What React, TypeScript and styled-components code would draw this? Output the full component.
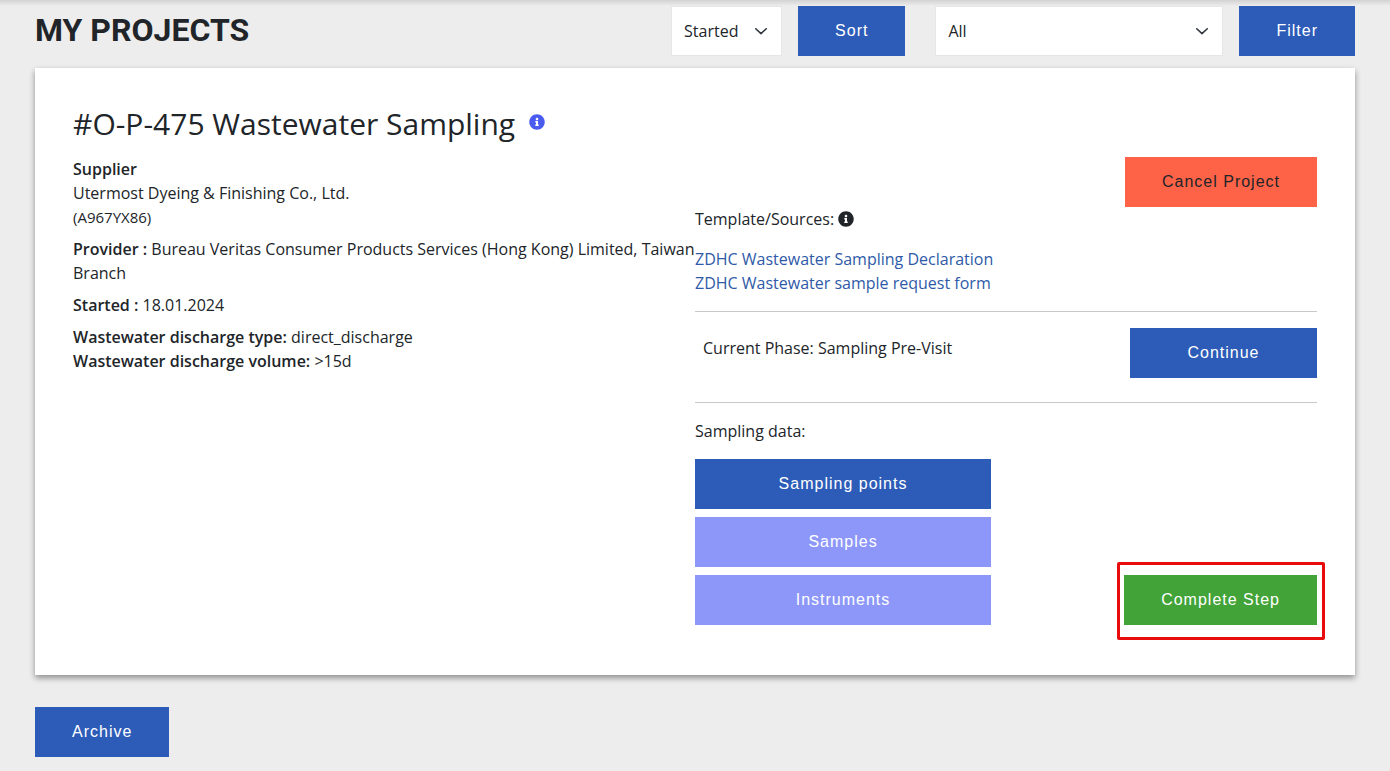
import React from "react";
import styled, { createGlobalStyle } from "styled-components";
import { FaInfoCircle } from "react-icons/fa";

const GlobalStyle = createGlobalStyle`
  *, *::before, *::after { box-sizing: border-box; }
  body {
    margin: 0;
    background: #ededed;
    color: #212529;
    font-family: "Open Sans", "Noto Sans", sans-serif;
    font-size: 16px;
    line-height: 24px;
  }
`;

const Page = styled.div`
  min-height: 100vh;
  padding: 6px 35px 14px;
  background: linear-gradient(#d2d2d2, #ededed) top / 100% 6px no-repeat;
`;

const Header = styled.header`
  display: flex;
  justify-content: space-between;
  align-items: flex-start;
  margin-bottom: 12px;
`;

const PageTitle = styled.h1`
  margin: 0;
  font-family: "Roboto", sans-serif;
  font-size: 32px;
  font-weight: 700;
  line-height: 48px;
  text-transform: uppercase;
`;

const Controls = styled.div`
  display: flex;
  gap: 30px;
`;

const ControlGroup = styled.form`
  display: flex;
  align-items: center;
  gap: 16px;
`;

const SelectBox = styled.div<{ $width: number }>`
  position: relative;
  width: ${(p) => p.$width}px;

  svg {
    position: absolute;
    top: 19px;
    right: 13px;
    pointer-events: none;
  }
`;

const Select = styled.select`
  display: block;
  width: 100%;
  height: 50px;
  padding: 0 32px 0 12px;
  appearance: none;
  border: 1px solid #e6e6e6;
  border-radius: 0;
  background: #fff;
  color: #212529;
  font: inherit;
`;

const tones = {
  blue: ["#2d5cb8", "#fff"],
  lavender: ["#8c97f9", "#fff"],
  red: ["#ff6347", "#212529"],
  green: ["#42a338", "#fff"],
};

const Button = styled.button<{ $tone?: keyof typeof tones; $minWidth?: number }>`
  min-width: ${(p) => p.$minWidth ?? 0}px;
  height: 50px;
  padding: 0 37px;
  border: 0;
  background: ${(p) => tones[p.$tone ?? "blue"][0]};
  color: ${(p) => tones[p.$tone ?? "blue"][1]};
  font-family: "Liberation Sans", Arial, sans-serif;
  font-size: 16px;
  letter-spacing: 1px;
  white-space: nowrap;
  cursor: pointer;
`;

const Card = styled.article`
  margin-bottom: 32px;
  padding: 38px 38px 50px;
  background: #fff;
  box-shadow: 0 3px 6px rgba(0, 0, 0, 0.4);
`;

const IconButton = styled.button<{ $color: string }>`
  display: inline-flex;
  padding: 0;
  border: 0;
  background: none;
  color: ${(p) => p.$color};
  font-size: 16px;
  cursor: pointer;
`;

const CardTitle = styled.h2`
  display: flex;
  align-items: flex-start;
  gap: 14px;
  margin: 0 0 15px;
  font-size: 30px;
  font-weight: 400;
  line-height: 36px;

  ${IconButton} {
    margin-top: 8px;
  }
`;

const Columns = styled.div`
  display: grid;
  grid-template-columns: 1fr 1fr;
`;

const Details = styled.div`
  p {
    margin: 0 0 8px;
  }

  strong {
    font-weight: 600;
  }
`;

const Code = styled.span`
  font-size: 15px;
  line-height: 16px;
`;

const Actions = styled.div`
  display: flex;
  flex-direction: column;
`;

const Row = styled.div<{ $align?: string }>`
  display: flex;
  justify-content: space-between;
  align-items: ${(p) => p.$align ?? "flex-start"};
`;

const CancelRow = styled(Row)`
  justify-content: flex-end;
`;

const Sources = styled.div`
  display: flex;
  align-items: center;
  gap: 4px;
  margin-bottom: 16px;
`;

const LinkList = styled.ul`
  margin: 0;
  padding: 0;
  list-style: none;
`;

const Link = styled.a`
  color: #2f5aa8;
  text-decoration: none;
`;

const Divider = styled.hr`
  width: 100%;
  margin: 16px 0;
  border: 0;
  border-top: 1px solid #c8c9ca;
`;

const PhaseRow = styled(Row)`
  padding-bottom: 8px;
`;

const Phase = styled.p`
  margin: 8px;
`;

const DataLabel = styled.p`
  margin: 0 0 16px;
`;

const ButtonStack = styled.div`
  display: grid;
  gap: 8px;
  width: 296px;
`;

const Highlight = styled.div`
  position: relative;

  &::after {
    content: "";
    position: absolute;
    inset: -13px -8px -15px -7px;
    border: 3px solid #e80c0c;
    border-radius: 2px;
    pointer-events: none;
  }
`;

const Chevron = () => (
  <svg width="16" height="12" viewBox="0 0 16 16" aria-hidden="true">
    <path
      d="m1 5 7 6.5 7-6.5"
      fill="none"
      stroke="#343a40"
      strokeWidth="2.2"
      strokeLinecap="round"
      strokeLinejoin="round"
    />
  </svg>
);

interface DropdownProps {
  label: string;
  width: number;
  options: string[];
}

const Dropdown = ({ label, width, options }: DropdownProps) => (
  <SelectBox $width={width}>
    <Select aria-label={label}>
      {options.map((o) => (
        <option key={o}>{o}</option>
      ))}
    </Select>
    <Chevron />
  </SelectBox>
);

export default function App() {
  return (
    <>
      <GlobalStyle />
      <Page>
        <Header>
          <PageTitle>My Projects</PageTitle>
          <Controls>
            <ControlGroup>
              <Dropdown label="Sort by" width={111} options={["Started"]} />
              <Button type="button">Sort</Button>
            </ControlGroup>
            <ControlGroup>
              <Dropdown label="Filter by" width={288} options={["All"]} />
              <Button type="button">Filter</Button>
            </ControlGroup>
          </Controls>
        </Header>
        <main>
          <Card>
            <CardTitle>
              #O-P-475 Wastewater Sampling
              <IconButton type="button" $color="#4a5cf0" aria-label="Project information">
                <FaInfoCircle />
              </IconButton>
            </CardTitle>
            <Columns>
              <Details>
                <p>
                  <strong>Supplier</strong>
                  <br />
                  Utermost Dyeing &amp; Finishing Co., Ltd.
                  <br />
                  <Code>(A967YX86)</Code>
                </p>
                <p>
                  <strong>Provider :</strong> Bureau Veritas Consumer Products Services (Hong Kong)
                  Limited, Taiwan Branch
                </p>
                <p>
                  <strong>Started :</strong> 18.01.2024
                </p>
                <p>
                  <strong>Wastewater discharge type:</strong> direct_discharge
                  <br />
                  <strong>Wastewater discharge volume:</strong> &gt;15d
                </p>
              </Details>
              <Actions>
                <CancelRow>
                  <Button type="button" $tone="red">Cancel Project</Button>
                </CancelRow>
                <Sources>
                  Template/Sources:
                  <IconButton type="button" $color="#212529" aria-label="Template information">
                    <FaInfoCircle />
                  </IconButton>
                </Sources>
                <LinkList>
                  <li><Link href="#declaration">ZDHC Wastewater Sampling Declaration</Link></li>
                  <li><Link href="#request-form">ZDHC Wastewater sample request form</Link></li>
                </LinkList>
                <Divider />
                <PhaseRow>
                  <Phase>Current Phase: Sampling Pre-Visit</Phase>
                  <Button type="button" $minWidth={187}>Continue</Button>
                </PhaseRow>
                <Divider />
                <DataLabel>Sampling data:</DataLabel>
                <Row $align="flex-end">
                  <ButtonStack>
                    <Button type="button">Sampling points</Button>
                    <Button type="button" $tone="lavender">Samples</Button>
                    <Button type="button" $tone="lavender">Instruments</Button>
                  </ButtonStack>
                  <Highlight>
                    <Button type="button" $tone="green">Complete Step</Button>
                  </Highlight>
                </Row>
              </Actions>
            </Columns>
          </Card>
          <Button type="button">Archive</Button>
        </main>
      </Page>
    </>
  );
}
